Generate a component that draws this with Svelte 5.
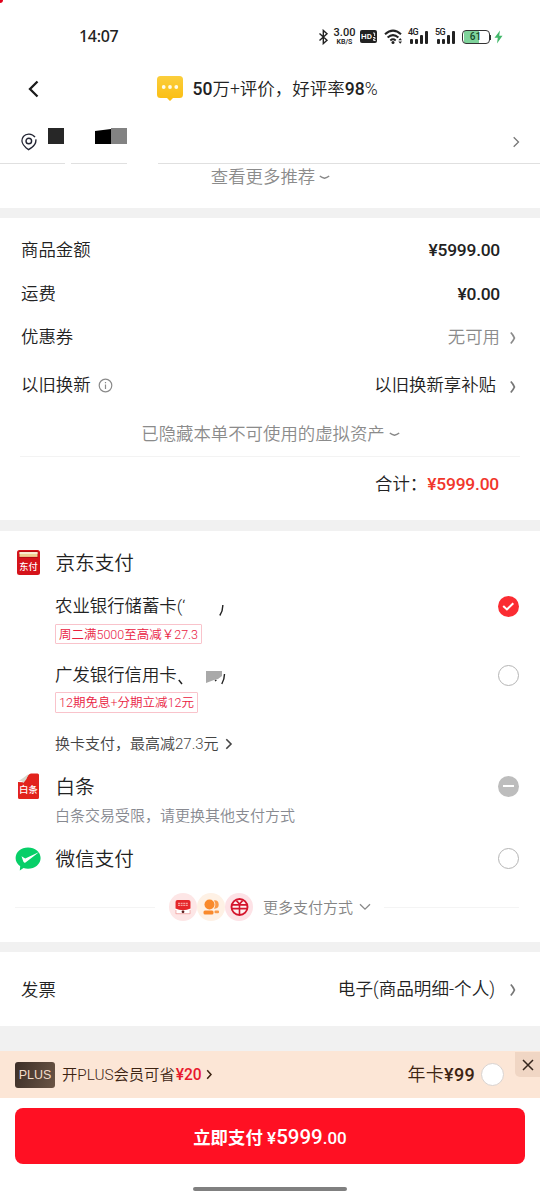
<!-- App.svelte : order checkout -->
<script>
  const bars = [5, 5, 9, 13];

  const amounts = [
    { label: '商品金额', value: '¥5999.00', kind: 'price', height: 44 },
    { label: '运费', value: '¥0.00', kind: 'price', height: 43 },
    { label: '优惠券', value: '无可用', kind: 'muted', arrow: true, height: 44 },
    { label: '以旧换新', value: '以旧换新享补贴', kind: 'trade', info: true, arrow: true, height: 51 }
  ];

  const cards = [
    { id: 'abc', name: '农业银行储蓄卡', tag: '周二满5000至高减￥27.3' },
    { id: 'cgb', name: '广发银行信用卡', tag: '12期免息+分期立减12元' }
  ];

  let selected = 'abc';
  let plus = false;
</script>

{#snippet arrow(cls)}
  <svg class={cls} width="8" height="14" viewBox="0 0 8 14">
    <path d="M1.8 1.5Q4.2 4 5.4 7Q4.2 10 1.8 12.5" fill="none" stroke="currentColor" stroke-width="1.8" />
  </svg>
{/snippet}

{#snippet radio(id)}
  <button class="radio" class:checked={selected === id} aria-label={id} on:click={() => (selected = id)}>
    {#if selected === id}
      <svg width="21" height="21" viewBox="0 0 21 21">
        <path d="M5.2 10L8.9 13.4L15.3 7.3" fill="none" stroke="#fff" stroke-width="2.1" />
      </svg>
    {/if}
  </button>
{/snippet}

<div class="page">
  <span class="corner"></span>
  <header class="status">
    <span class="time">14:07</span>
    <div class="indicators">
      <svg width="11" height="16" viewBox="0 0 11 16">
        <path d="M1.5 4.5L9 11.3L5.3 14.6V1.4L9 4.7L1.5 11.5" fill="none" stroke="#222" stroke-width="1.4" />
      </svg>
      <div class="speed"><b>3.00</b><small>KB/S</small></div>
      <span class="hd">HD<svg width="3" height="9" viewBox="0 0 3 9"><path d="M0 1H1.6V4M0 5.5H2V7H.6V8.5H2.6" fill="none" stroke="#fff" stroke-width=".9" /></svg></span>
      <svg class="wifi" width="20" height="16" viewBox="0 0 20 16">
        <g fill="none" stroke="#222" stroke-width="2">
          <path d="M1 5.3Q9 -2 17 5.3" />
          <path d="M3.6 8.5Q9 3.7 14.4 8.5" />
          <path d="M6.3 11.4Q9 9.1 11.7 11.4" />
        </g>
        <circle cx="9" cy="13.6" r="1.5" fill="#222" />
        <path d="M14.4 11.2L16.2 9L18 11.2zM14.4 12.6L16.2 14.8L18 12.6z" fill="#222" />
      </svg>
      {#each ['4G', '5G'] as net}
        <div class="signal">
          <small>{net}</small>
          {#each bars as h}<i style="height: {h}px"></i>{/each}
        </div>
      {/each}
      <div class="battery"><span>61</span></div>
      <svg class="bolt" width="9" height="14" viewBox="0 0 9 14">
        <path d="M6 0.5L0.5 7.8H3.8L3 13.5L8.5 5.7H5.2z" fill="#42b86a" />
      </svg>
    </div>
  </header>

  <div class="titlebar">
    <svg class="back" width="12" height="18" viewBox="0 0 12 18">
      <path d="M9.5 1.5L2 9L9.5 16.5" fill="none" stroke="#1a1a1a" stroke-width="2.3" />
    </svg>
    <div class="title">
      <svg class="bubble" width="26" height="25" viewBox="0 0 26 25">
        <defs>
          <linearGradient id="bubble" x1="0" y1="0" x2="0" y2="1">
            <stop offset="0" stop-color="#fbce3c" />
            <stop offset="1" stop-color="#fbbd10" />
          </linearGradient>
        </defs>
        <path d="M3.5 0H22.5Q26 0 26 3.5V18.5Q26 22 22.5 22H16L13 25L10 22H3.5Q0 22 0 18.5V3.5Q0 0 3.5 0z" fill="url(#bubble)" />
        <g fill="#fffbe8">
          <circle cx="6.7" cy="11" r="1.9" /><circle cx="13" cy="11" r="1.9" /><circle cx="19.3" cy="11" r="1.9" />
        </g>
      </svg>
      <h1><b>50</b>万+评价，好评率<b>98</b>%</h1>
    </div>
  </div>

  <div class="address">
    <svg class="pin" width="16" height="18" viewBox="0 0 16 18">
      <path d="M14 4.2C11 0.2 5 0.3 2.5 3.4C-0.4 7.3 1.4 11.8 5 14.7L7.6 16.7L10.5 14.7C13.5 12.4 15.3 9.5 14.8 6.4" fill="none" stroke="#222433" stroke-width="1.4" />
      <circle cx="7.8" cy="8" r="2.8" fill="none" stroke="#222433" stroke-width="1.4" />
    </svg>
    <i class="mask dark"></i>
    <svg class="mask-wide" width="32" height="16" viewBox="0 0 32 16">
      <path d="M0 3L16 1V16H0z" fill="#000" />
      <path d="M16 0H32V16H16z" fill="#828282" />
    </svg>
    <svg class="go" width="8" height="12" viewBox="0 0 8 12">
      <path d="M1.7 1.2L6.5 6L1.7 10.8" fill="none" stroke="#777" stroke-width="1.3" />
    </svg>
  </div>

  <div class="fold recommend">
    查看更多推荐
    <svg width="11" height="6" viewBox="0 0 11 6"><path d="M0.8 1Q3 2.8 5.5 3.2Q8 2.8 10.2 1" fill="none" stroke="#888" stroke-width="1.4" /></svg>
  </div>

  <section class="summary">
    {#each amounts as row}
      <div class="row" style="height: {row.height}px">
        <span>{row.label}</span>
        {#if row.info}
          <svg class="info" width="15" height="15" viewBox="0 0 15 15">
            <circle cx="7.5" cy="7.5" r="6.3" fill="none" stroke="#8a8a8a" stroke-width="1.2" />
            <path d="M7.5 6.4V11M7.5 4V5.2" stroke="#8a8a8a" stroke-width="1.2" />
          </svg>
        {/if}
        <span class="value {row.kind}">{row.value}</span>
        {#if row.arrow}{@render arrow('arrow ' + row.kind)}{/if}
      </div>
    {/each}
    <div class="fold hidden-assets">
      已隐藏本单不可使用的虚拟资产
      <svg width="11" height="6" viewBox="0 0 11 6"><path d="M0.8 1Q3 2.8 5.5 3.2Q8 2.8 10.2 1" fill="none" stroke="#888" stroke-width="1.4" /></svg>
    </div>
    <div class="total"><span>合计：</span><b>¥5999.00</b></div>
  </section>

  <section class="payments">
    <div class="method jd">
      <svg class="logo" width="26" height="26" viewBox="0 0 26 26">
        <rect x="2" y="0" width="23" height="25" rx="2.5" fill="#d5131a" />
        <rect x="4" y="1" width="19" height="7" rx="1" fill="#b50c12" />
        <rect x="4.5" y="2.1" width="18" height="4.8" fill="#efcf94" />
        <rect x="4.5" y="2.1" width="18" height="1.8" fill="#fbf0d8" />
        <text x="13.5" y="20.4" text-anchor="middle" font-size="9.2" font-weight="500" fill="#fff">东付</text>
      </svg>
      <h2>京东支付</h2>
    </div>

    {#each cards as card}
      <div class="card">
        <div class="card-name">
          <span>{card.name}</span>
          {#if card.id === 'abc'}
            <span class="paren">(‘</span>
            <svg class="tail-abc" width="5" height="11" viewBox="0 0 5 11"><path d="M3.8 0Q4 5.5 0.8 10.5" fill="none" stroke="#222" stroke-width="1.4" /></svg>
          {:else}
            <svg class="tail-cgb" width="48" height="18" viewBox="0 0 48 18">
              <path d="M0.8 12L4 16" stroke="#222" stroke-width="1.5" />
              <path d="M28 3H44V8L40 11L36 12L28 15z" fill="#a9a9a9" />
              <path d="M46.5 6Q46.5 11 43.8 16M37 13L38.4 12" fill="none" stroke="#222" stroke-width="1.4" />
            </svg>
          {/if}
          {@render radio(card.id)}
        </div>
        <span class="tag {card.id}">{card.tag}</span>
      </div>
    {/each}

    <div class="change">
      换卡支付，最高减27.3元
      <svg width="8" height="12" viewBox="0 0 8 12"><path d="M1.3 1.3L6 6L1.3 10.7" fill="none" stroke="#444" stroke-width="1.6" /></svg>
    </div>

    <div class="method baitiao">
      <svg class="logo" width="26" height="28" viewBox="0 0 26 28">
        <path d="M3 9L8 9.3L13.5 2Q14.5 0.5 16 0.5H22.5Q24 0.5 24 2V24.5Q24 26 22.5 26H4.5Q3 26 3 24.5z" fill="#e2231c" />
        <path d="M3.5 8Q7 5.8 13.5 1Q12 6.5 8.5 10Q7 7.2 3.5 8z" fill="#d8d8cc" />
        <text x="13.5" y="20" text-anchor="middle" font-size="9.4" font-weight="500" fill="#fff">白条</text>
      </svg>
      <h2>白条</h2>
      <span class="radio disabled"></span>
    </div>
    <p class="note">白条交易受限，请更换其他支付方式</p>

    <div class="method wechat">
      <svg class="logo" width="26" height="24" viewBox="0 0 26 24">
        <path d="M13 0.5C20 0.5 25.6 5 25.6 11.1S20 21.8 13 21.8Q10.5 21.8 8.5 21.1L4.8 23.5L5.2 19.2C2.2 17.2 0.6 14.5 0.6 11.1C0.6 5 6 0.5 13 0.5z" fill="#07cf68" />
        <path d="M6.5 9.2L10.2 11.6L24.2 5L10.5 15.4Q9 16.4 8.3 14.6z" fill="#fff" />
      </svg>
      <h2>微信支付</h2>
      {@render radio('wechat')}
    </div>

    <div class="more">
      <hr />
      <div class="channels">
        <svg width="28" height="28" viewBox="0 0 28 28">
          <circle cx="14" cy="14" r="14" fill="#fde6e6" />
          <rect x="6.5" y="7" width="15" height="14" rx="2" fill="#fff" />
          <path d="M8.5 7H19.5Q21.5 7 21.5 9V15.5Q18 17.3 14 17.3T6.5 15.5V9Q6.5 7 8.5 7z" fill="#e5262a" />
          <path d="M9 10.3H19M9 12.3H19" stroke="#f89c99" stroke-width="1.2" stroke-dasharray="2 .6" />
          <path d="M6.9 17V20.7H21.1V17" fill="none" stroke="#ef9b98" stroke-width=".8" />
          <circle cx="14" cy="18.8" r="1.4" fill="#5e2020" />
        </svg>
        <svg width="28" height="28" viewBox="0 0 28 28">
          <circle cx="14" cy="14" r="14" fill="#fef1e5" />
          <circle cx="12.5" cy="11.5" r="5" fill="#f98a2c" />
          <path d="M17 7.4Q21.5 7 21.7 11.5T17 15.6Q19.5 11.5 17 7.4z" fill="#f99a49" />
          <rect x="6.5" y="17.6" width="10" height="4" rx="1.5" fill="#f98a2c" />
          <rect x="17.5" y="17.6" width="4.5" height="2.6" rx="1" fill="#f99a49" />
        </svg>
        <svg width="28" height="28" viewBox="0 0 28 28">
          <circle cx="14" cy="14" r="14" fill="#fde2e6" />
          <circle cx="14.5" cy="14" r="8" fill="#fff0f1" stroke="#d4152d" stroke-width="1.9" />
          <path d="M11.4 7.6L14.5 11L17.6 7.6M7 11.9H22M7 15.6H22M14.5 10.5V21.5" fill="none" stroke="#d4152d" stroke-width="1.6" />
        </svg>
      </div>
      <span>更多支付方式</span>
      <svg width="12" height="8" viewBox="0 0 12 8"><path d="M1 1.2L6 6.2L11 1.2" fill="none" stroke="#888" stroke-width="1.3" /></svg>
      <hr class="right" />
    </div>
  </section>

  <section class="invoice">
    <span>发票</span>
    <span class="value">电子(商品明细-个人)</span>
    {@render arrow('arrow')}
  </section>

  <div class="plus">
    <span class="plus-logo">PLUS</span>
    <span class="plus-text">开PLUS会员可省</span><b>¥20</b>
    <svg class="plus-go" width="7" height="11" viewBox="0 0 7 11"><path d="M1.2 1.2L5 5.5L1.2 9.8" fill="none" stroke="#3d2413" stroke-width="1.5" /></svg>
    <span class="year">年卡<b>¥99</b></span>
    <button class="plus-radio" class:on={plus} aria-label="PLUS" on:click={() => (plus = !plus)}></button>
    <div class="close">
      <svg width="12" height="12" viewBox="0 0 12 12"><path d="M1 1L11 11M11 1L1 11" stroke="#35261d" stroke-width="1.5" /></svg>
    </div>
  </div>

  <footer>
    <button class="pay">立即支付 <span><small>¥</small>5999<small>.00</small></span></button>
    <i class="home"></i>
  </footer>
</div>

<style>
  :global(body) {
    background: #fff;
  }

  .page {
    position: relative;
    width: 540px;
    height: 1200px;
    overflow: hidden;
    background: #f1f1f1;
    color: #222;
    font-family: Roboto, "Noto Sans CJK SC", sans-serif;
    font-size: 17.4px;
    font-weight: 350;
    line-height: 1.2;
    white-space: nowrap;
  }

  .page * {
    box-sizing: border-box;
  }

  h1, h2, p {
    margin: 0;
    font-weight: inherit;
  }

  button {
    padding: 0;
    border: 0;
    font-family: inherit;
  }

  svg {
    flex: none;
    display: block;
  }

  b {
    font-weight: 500;
  }

  .corner {
    position: absolute;
    top: -3px;
    left: -3px;
    width: 6px;
    height: 6px;
    border-radius: 50%;
    background: #e1001a;
  }

  .status {
    display: flex;
    align-items: center;
    justify-content: space-between;
    height: 72px;
    padding: 1px 37px 0 79px;
    background: #fff;
  }

  .time {
    margin-top: 1px;
    font-family: "Noto Sans", sans-serif;
    font-size: 16px;
    font-weight: 500;
    letter-spacing: -0.3px;
  }

  .indicators {
    display: flex;
    align-items: center;
    height: 16px;
    color: #222;
  }

  .speed {
    display: flex;
    flex-direction: column;
    align-items: center;
    width: 23px;
    margin-left: 4px;
  }

  .speed b {
    font-size: 11px;
    line-height: 11px;
  }

  .speed small {
    font-size: 7px;
    font-weight: 600;
    line-height: 8px;
  }

  .hd {
    display: flex;
    align-items: center;
    justify-content: center;
    gap: 1px;
    width: 17px;
    height: 13px;
    margin-left: 4px;
    border-radius: 2px;
    background: #222;
    color: #fff;
    font-size: 8px;
    font-weight: 600;
  }

  .wifi {
    margin-left: 7px;
  }

  .signal {
    position: relative;
    display: flex;
    align-items: flex-end;
    gap: 2px;
    width: 20px;
    height: 14px;
    margin-left: 4px;
    padding-left: 2px;
  }

  .signal + .signal {
    margin-left: 7px;
  }

  .signal small {
    position: absolute;
    top: -2px;
    left: 0;
    font-size: 9px;
    font-weight: 500;
    line-height: 9px;
    letter-spacing: -0.6px;
  }

  .signal i {
    width: 3px;
    flex: none;
    border-radius: 1px;
    background: #222;
  }

  .battery {
    position: relative;
    display: flex;
    align-items: center;
    justify-content: center;
    width: 28px;
    height: 14px;
    margin-left: 7px;
    padding-right: 1px;
    border: 1px solid #333;
    border-radius: 4px;
    background: linear-gradient(90deg, #fff 1px, #7fd39b 1px 16px, #fff 16px);
    font-size: 10px;
    font-weight: 500;
    color: #174a29;
  }

  .battery::after {
    content: '';
    position: absolute;
    top: 4px;
    right: -2px;
    width: 1px;
    height: 5px;
    background: #333;
  }

  .bolt {
    margin-left: 4px;
  }

  .titlebar {
    display: flex;
    align-items: center;
    height: 43px;
    padding: 0 28px 9px;
    background: #fff;
  }

  .title {
    display: flex;
    align-items: center;
    gap: 10px;
    margin-left: 116.5px;
  }

  .bubble {
    margin-top: -2px;
  }

  h1 {
    font-size: 17.5px;
  }

  .address {
    display: flex;
    align-items: center;
    height: 49px;
    padding: 4px 20px 0 21px;
    background:
      linear-gradient(90deg, #e0e0e0 65px, #fff 65px 71px, #e0e0e0 71px 127px, #fff 127px 158px, #e0e0e0 158px) 0 100% / 100% 1px no-repeat,
      #fff;
  }

  .mask {
    width: 16px;
    height: 16px;
    margin: -12px 0 0 11px;
    background: #272727;
  }

  .mask-wide {
    margin: -12px 0 0 31px;
  }

  .go {
    margin-left: auto;
  }

  .fold {
    display: flex;
    align-items: center;
    justify-content: center;
    gap: 4px;
    background: #fff;
    color: #8b8b8b;
  }

  .recommend {
    height: 44px;
    padding: 0 0 17px 1px;
  }

  .summary {
    height: 302px;
    margin-top: 10px;
    padding: 10px 20px 0;
    background: #fff;
  }

  .row {
    display: flex;
    align-items: center;
    padding: 1px 0 0 1px;
  }

  .info {
    margin-left: 7px;
  }

  .value {
    margin-left: auto;
  }

  .row .price {
    padding-right: 20px;
    font-weight: 500;
    letter-spacing: -0.25px;
  }

  .row .muted {
    color: #8b8b8b;
  }

  .arrow {
    margin: 0 3px 0 9px;
    color: #777;
  }

  .arrow.trade {
    margin: 4px 3px 0 13px;
  }

  .hidden-assets {
    height: 47px;
    padding: 3px 0 0 1px;
    border-bottom: 1px solid #f3f3f3;
  }

  .total {
    display: flex;
    align-items: center;
    justify-content: flex-end;
    height: 54px;
    padding-right: 21px;
  }

  .total b {
    color: #f1362b;
    letter-spacing: -0.2px;
  }

  .payments {
    height: 411px;
    margin-top: 11px;
    padding: 0 21px 0 15px;
    background: #fff;
  }

  .method {
    display: flex;
    align-items: center;
    height: 28px;
  }

  .jd {
    height: 64px;
  }

  .logo {
    margin-right: 14.5px;
  }

  h2 {
    padding-top: 2px;
    font-size: 19.6px;
  }

  .card {
    height: 69px;
    padding-left: 40px;
  }

  .card-name {
    display: flex;
    align-items: center;
    height: 23px;
  }

  .tail-abc {
    margin: 8px 0 0 34px;
  }

  .tail-cgb {
    margin: 2px 0 0 1px;
  }

  .tag {
    display: inline-flex;
    align-items: center;
    justify-content: center;
    width: 147px;
    height: 20px;
    margin-top: 6px;
    border: 1px solid #f9c3cb;
    border-radius: 1px;
    color: #e9213f;
    font-size: 12.5px;
  }

  .tag.cgb {
    width: 143px;
    height: 21px;
    margin-top: 5px;
  }

  .radio {
    flex: none;
    width: 21px;
    height: 21px;
    margin-left: auto;
    border: 1px solid #b5b5b5;
    border-radius: 50%;
    background: #fff;
  }

  .radio.checked {
    border: 0;
    background: #fb2c32;
  }

  .radio.disabled {
    display: flex;
    align-items: center;
    justify-content: center;
    margin-top: -2px;
    border: 0;
    background: #bdbdbd;
  }

  .wechat .radio {
    margin-top: -2px;
  }

  .radio.disabled::after {
    content: '';
    width: 11px;
    height: 2px;
    background: #fff;
  }

  .change {
    display: flex;
    align-items: center;
    gap: 6px;
    height: 28px;
    margin: -3px 0 15px;
    padding-left: 40px;
    color: #444;
    font-size: 15px;
  }

  .note {
    height: 24px;
    margin: 3px 0 17px;
    padding-left: 40px;
    color: #888a91;
    font-size: 15px;
    line-height: 24px;
  }

  .more {
    display: flex;
    align-items: center;
    height: 28px;
    margin-top: 20px;
    color: #858585;
    font-size: 15px;
  }

  .more > span {
    padding-top: 1px;
  }

  hr {
    width: 140px;
    height: 1px;
    margin: 0 14px 0 0;
    border: 0;
    background: #f4f4f4;
  }

  hr.right {
    width: 135px;
    margin: 0 0 0 auto;
  }

  .channels {
    display: flex;
    margin-right: 10px;
  }

  .more > svg {
    margin-left: 6px;
  }

  .invoice {
    display: flex;
    align-items: center;
    height: 74px;
    margin-top: 10px;
    padding: 2px 20px 0 21px;
    background: #fff;
  }

  .invoice .value {
    font-size: 17.6px;
  }

  .invoice .arrow {
    margin-left: 14px;
  }

  .plus {
    position: relative;
    display: flex;
    align-items: center;
    height: 47px;
    margin-top: 25px;
    padding: 0 36px 0 15px;
    background: #fce6d6;
    color: #3d2413;
    font-size: 15px;
  }

  .plus-logo {
    width: 40px;
    margin-right: 7px;
    border-radius: 3px;
    background: linear-gradient(110deg, #3c2e27, #6b5545);
    color: #f3dcca;
    font-family: "Liberation Sans", Arial, sans-serif;
    font-size: 12.5px;
    line-height: 26px;
    text-align: center;
  }

  .plus-text {
    padding-top: 1px;
    font-size: 15.3px;
  }

  .plus > b {
    margin-left: 1px;
    padding-top: 1px;
    color: #e8172c;
    font-size: 15.6px;
  }

  .plus-go {
    margin-left: 4px;
  }

  .year {
    margin-left: auto;
    padding-top: 1px;
    font-size: 18px;
    letter-spacing: 0.3px;
  }

  .plus-radio {
    width: 23px;
    height: 23px;
    margin-left: 6px;
    border: 1.5px solid #d9d3d0;
    border-radius: 50%;
    background: #fff;
  }

  .plus-radio.on {
    background: #fb2c32;
  }

  .close {
    position: absolute;
    top: 1px;
    right: 0;
    display: flex;
    align-items: center;
    justify-content: center;
    width: 25px;
    height: 25px;
    border-bottom-left-radius: 5px;
    background: #f0d6c4;
  }

  footer {
    display: flex;
    flex-direction: column;
    align-items: center;
    height: 102px;
    padding-top: 10px;
    background: #fff;
  }

  .pay {
    width: 510px;
    height: 56px;
    border-radius: 8px;
    background: #ff1023;
    color: #fff;
    font-size: 17.4px;
    font-weight: 600;
  }

  .pay span {
    font-size: 20.5px;
    font-weight: 500;
  }

  .pay small {
    font-size: 17px;
  }

  .home {
    width: 154px;
    height: 4px;
    margin-top: 23px;
    border-radius: 2px;
    background: #808080;
  }
</style>
